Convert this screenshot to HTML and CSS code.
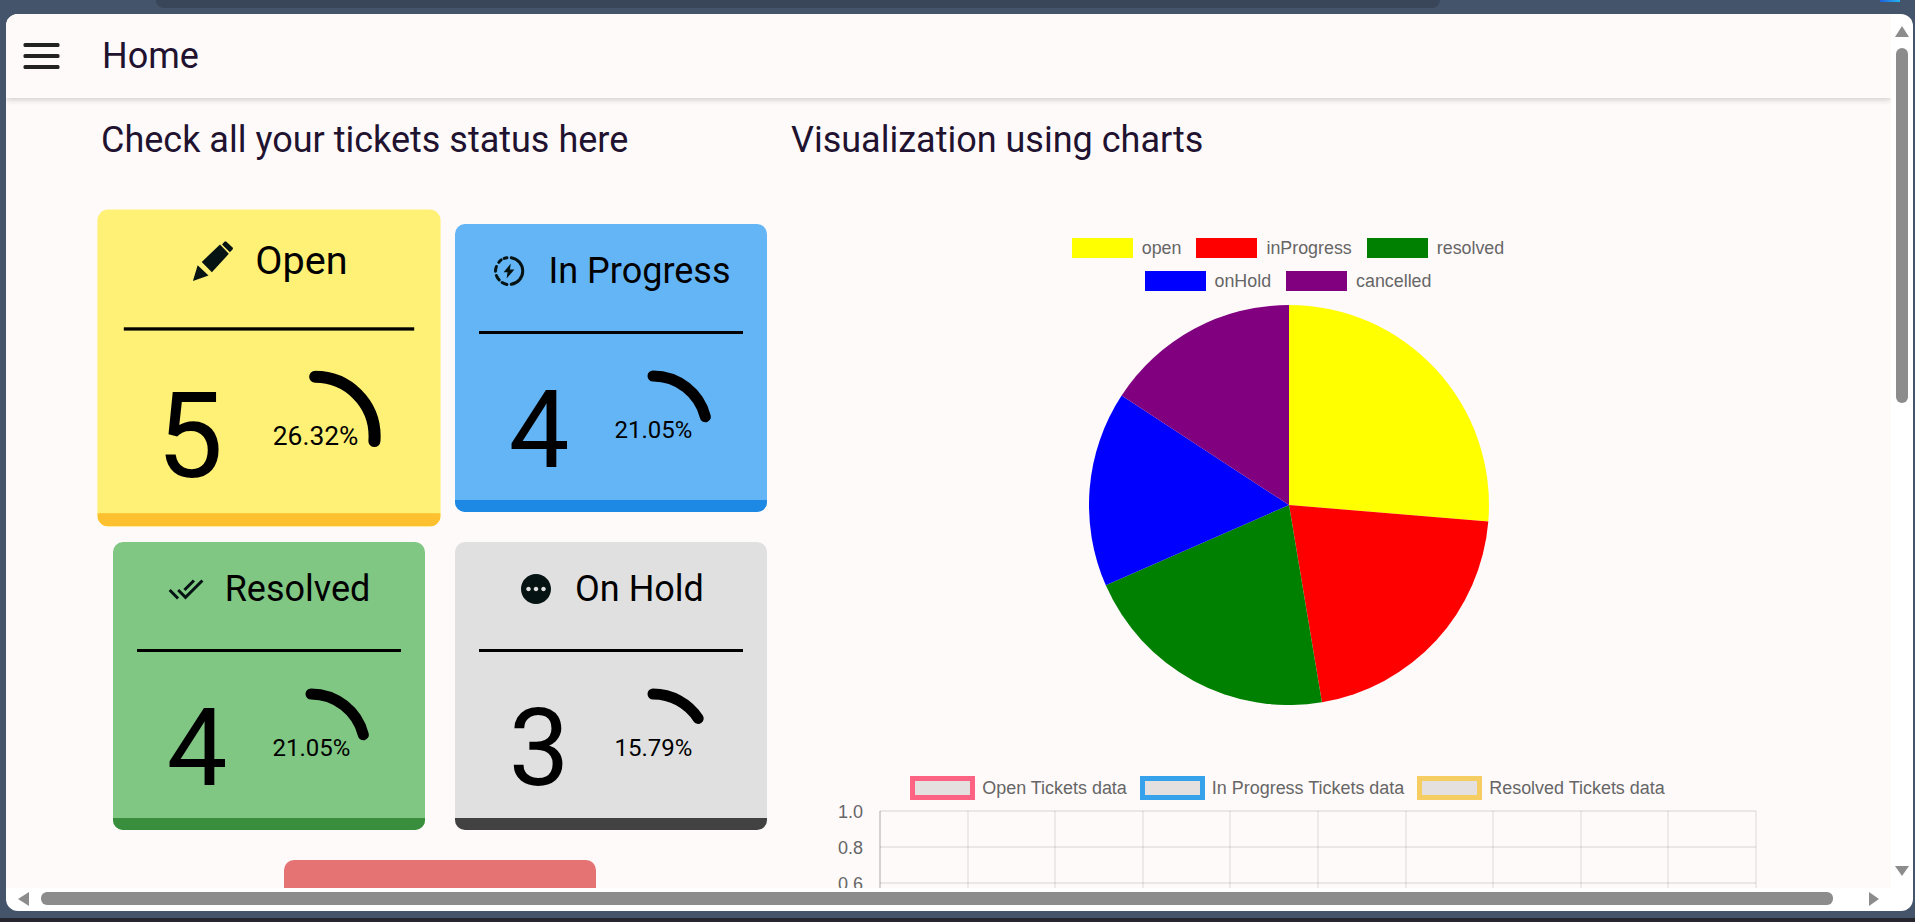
FILE: index.html
```html
<!DOCTYPE html>
<html>

	<head>
		<meta charset="UTF-8">
		<title>Home</title>
		<link rel="stylesheet" href="styles.css">
	</head>

	<body>
		<!--top of the browser behind the page-->
		<div class="topstrip">
			<div class="toptab"></div>
			<div class="topmark"></div>
		</div>

		<div class="window">
			<div class="pane">
				<header class="appbar">
					<svg class="menuicon" viewBox="0 0 36 26">
						<rect x="0" y="0" width="36" height="4" rx="1.5"></rect>
						<rect x="0" y="11" width="36" height="4" rx="1.5"></rect>
						<rect x="0" y="22" width="36" height="4" rx="1.5"></rect>
					</svg>
					<div class="apptitle">Home</div>
				</header>

				<div class="content">
					<!--ticket cards-->
					<section class="leftcol">
						<h2 class="heading">Check all your tickets status here</h2>
						<div class="cards">
							<div class="card card-open">
								<div class="cardtitle">
									<svg class="icon" viewBox="60 36 130 128">
										<polygon points="66,158 80,112 112,142"></polygon>
										<polygon points="92,102 146,50 172,78 122,132"></polygon>
										<path d="M152 50 l7-8 q3-2 6 0 l18 17 q3 3 0 6 l-8 8 z"></path>
									</svg>
									<span>Open</span>
								</div>
								<div class="divider"></div>
								<div class="cardbody">
									<div class="count">5</div>
									<div class="gauge">
										<svg viewBox="0 0 120 120">
											<circle cx="60" cy="60" r="54" pathLength="100" stroke-dasharray="26.32 200" transform="rotate(-90 60 60)"></circle>
										</svg>
										<span class="percent">26.32%</span>
									</div>
								</div>
								<div class="cardfoot"></div>
							</div>

							<div class="card card-progress">
								<div class="cardtitle">
									<svg class="icon" viewBox="0 0 24 24">
										<g class="dashring">
											<path d="M13.5 3.1A9 9 0 0 1 13.5 20.9"></path>
											<path d="M10.6 21A9 9 0 0 1 7.4 19.7"></path>
											<path d="M5.5 18A9 9 0 0 1 3.6 15"></path>
											<path d="M3 12.2A9 9 0 0 1 3.6 9"></path>
											<path d="M5.2 6.2A9 9 0 0 1 6.8 4.6"></path>
											<path d="M8.8 3.6A9 9 0 0 1 10.6 3.1"></path>
										</g>
										<polygon points="13.2,7 8.4,12.8 11,12.8 10.4,17 15.6,11 12.6,11"></polygon>
									</svg>
									<span>In Progress</span>
								</div>
								<div class="divider"></div>
								<div class="cardbody">
									<div class="count">4</div>
									<div class="gauge">
										<svg viewBox="0 0 120 120">
											<circle cx="60" cy="60" r="54" pathLength="100" stroke-dasharray="21.05 200" transform="rotate(-90 60 60)"></circle>
										</svg>
										<span class="percent">21.05%</span>
									</div>
								</div>
								<div class="cardfoot"></div>
							</div>

							<div class="card card-resolved">
								<div class="cardtitle">
									<svg class="icon" viewBox="0 0 24 24">
										<path d="M18 7l-1.41-1.41-6.34 6.34 1.41 1.41L18 7zm4.24-1.41L11.66 16.17 7.48 12l-1.41 1.41L11.66 19l12-12-1.42-1.41zM.41 13.41L6 19l1.41-1.41L1.83 12 .41 13.41z"></path>
									</svg>
									<span>Resolved</span>
								</div>
								<div class="divider"></div>
								<div class="cardbody">
									<div class="count">4</div>
									<div class="gauge">
										<svg viewBox="0 0 120 120">
											<circle cx="60" cy="60" r="54" pathLength="100" stroke-dasharray="21.05 200" transform="rotate(-90 60 60)"></circle>
										</svg>
										<span class="percent">21.05%</span>
									</div>
								</div>
								<div class="cardfoot"></div>
							</div>

							<div class="card card-hold">
								<div class="cardtitle">
									<svg class="icon" viewBox="0 0 24 24">
										<path d="M12 2C6.48 2 2 6.48 2 12s4.48 10 10 10 10-4.48 10-10S17.52 2 12 2zM7 13.5c-.83 0-1.5-.67-1.5-1.5s.67-1.5 1.5-1.5 1.5.67 1.5 1.5-.67 1.5-1.5 1.5zm5 0c-.83 0-1.5-.67-1.5-1.5s.67-1.5 1.5-1.5 1.5.67 1.5 1.5-.67 1.5-1.5 1.5zm5 0c-.83 0-1.5-.67-1.5-1.5s.67-1.5 1.5-1.5 1.5.67 1.5 1.5-.67 1.5-1.5 1.5z"></path>
									</svg>
									<span>On Hold</span>
								</div>
								<div class="divider"></div>
								<div class="cardbody">
									<div class="count">3</div>
									<div class="gauge">
										<svg viewBox="0 0 120 120">
											<circle cx="60" cy="60" r="54" pathLength="100" stroke-dasharray="15.79 200" transform="rotate(-90 60 60)"></circle>
										</svg>
										<span class="percent">15.79%</span>
									</div>
								</div>
								<div class="cardfoot"></div>
							</div>

							<div class="card card-cancelled"></div>
						</div>
					</section>

					<!--charts-->
					<section class="rightcol">
						<h2 class="heading">Visualization using charts</h2>
						<div class="charts">
							<div class="pielegend">
								<div class="legendrow">
									<span class="legenditem"><i class="swatch" style="background:#ffff00"></i>open</span>
									<span class="legenditem"><i class="swatch" style="background:#ff0000"></i>inProgress</span>
									<span class="legenditem"><i class="swatch" style="background:#008000"></i>resolved</span>
								</div>
								<div class="legendrow">
									<span class="legenditem"><i class="swatch" style="background:#0000ff"></i>onHold</span>
									<span class="legenditem"><i class="swatch" style="background:#800080"></i>cancelled</span>
								</div>
							</div>

							<svg class="pie" viewBox="-200 -200 400 400">
								<path fill="#ffff00" d="M0 0 L0 -200 A200 200 0 0 1 199.3 16.5 Z"></path>
								<path fill="#ff0000" d="M0 0 L199.3 16.5 A200 200 0 0 1 32.9 197.3 Z"></path>
								<path fill="#008000" d="M0 0 L32.9 197.3 A200 200 0 0 1 -183.2 80.3 Z"></path>
								<path fill="#0000ff" d="M0 0 L-183.2 80.3 A200 200 0 0 1 -167.4 -109.4 Z"></path>
								<path fill="#800080" d="M0 0 L-167.4 -109.4 A200 200 0 0 1 0 -200 Z"></path>
							</svg>

							<div class="linelegend">
								<span class="lineitem"><i class="linebox box-open"></i>Open Tickets data</span>
								<span class="lineitem"><i class="linebox box-progress"></i>In Progress Tickets data</span>
								<span class="lineitem"><i class="linebox box-resolved"></i>Resolved Tickets data</span>
							</div>

							<svg class="linechart" width="940" height="110" viewBox="0 0 940 110">
								<g class="grid">
									<path d="M62 11H938M62 47H938M62 83H938"></path>
									<path d="M150 11V110M237 11V110M325 11V110M412 11V110M500 11V110M588 11V110M675 11V110M763 11V110M850 11V110M938 11V110"></path>
									<path class="axis" d="M62 11V110"></path>
								</g>
								<text x="45" y="18">1.0</text>
								<text x="45" y="54">0.8</text>
								<text x="45" y="90">0.6</text>
							</svg>
						</div>
					</section>
				</div>
			</div>

			<!--scrollbars-->
			<div class="vscroll">
				<div class="arrow-up"></div>
				<div class="vthumb"></div>
				<div class="arrow-down"></div>
			</div>
			<div class="hscroll">
				<div class="arrow-left"></div>
				<div class="hthumb"></div>
				<div class="arrow-right"></div>
			</div>
			<div class="corner"></div>
		</div>

		<div class="bottomstrip"></div>
	</body>

</html>
```

FILE: styles.css
```css
* {
	margin: 0;
	padding: 0;
	box-sizing: border-box;
}

body {
	width: 1915px;
	height: 922px;
	overflow: hidden;
	display: flex;
	flex-direction: column;
	background-color: #44546a;
	font-family: Roboto, "Liberation Sans", sans-serif;
}

.topstrip {
	height: 14px;
	display: flex;
	align-items: flex-start;
}

.toptab {
	width: 1284px;
	height: 8px;
	margin-left: 156px;
	background-color: #394558;
	border-radius: 0 0 10px 10px;
}

.topmark {
	width: 20px;
	height: 2px;
	margin-left: 440px;
	background: linear-gradient(90deg, #1f5fe0, #22b5f0);
}

.bottomstrip {
	height: 4px;
	margin-top: 7px;
	background-color: #26262f;
}

.window {
	height: 897px;
	margin: 0 2px 0 6px;
	display: grid;
	grid-template-columns: 1885px 22px;
	grid-template-rows: 874px 23px;
	background-color: #fff;
	border-radius: 12px;
	overflow: hidden;
}

.pane {
	overflow: hidden;
	background-color: #fffafa;
}

/* app bar */
.appbar {
	height: 84px;
	display: flex;
	align-items: center;
	padding-left: 17px;
	position: relative;
	background-color: #fffafa;
	box-shadow: 0 2px 6px rgba(0, 0, 0, 0.18);
}

.menuicon {
	width: 37px;
	height: 26px;
	fill: #222;
}

.apptitle {
	margin-left: 42px;
	font-size: 36px;
	line-height: 40px;
	color: #21122f;
}

.content {
	display: flex;
}

.heading {
	height: 40px;
	font-size: 36px;
	line-height: 40px;
	font-weight: 400;
	white-space: nowrap;
	color: #21122f;
}

.leftcol {
	width: 761px;
	flex: none;
	padding: 22px 0 0 95px;
}

.leftcol .heading {
	margin-bottom: 64px;
}

.rightcol {
	width: 996px;
	flex: none;
	margin-left: 24px;
	padding-top: 22px;
}

.rightcol .heading {
	margin-bottom: 78px;
}

/* cards */
.cards {
	width: 654px;
	margin-left: 12px;
	display: flex;
	flex-wrap: wrap;
	justify-content: center;
	gap: 30px;
}

.card {
	width: 312px;
	height: 288px;
	display: flex;
	flex-direction: column;
	border-radius: 10px;
	overflow: hidden;
	color: #000;
}

.card-open {
	background-color: #fff176;
	transform: scale(1.1);
}

.card-progress {
	background-color: #64b5f6;
}

.card-resolved {
	background-color: #81c784;
}

.card-hold {
	background-color: #e0e0e0;
}

.card-cancelled {
	background-color: #e57373;
}

.card-open .cardfoot {
	background-color: #fdc02f;
}

.card-progress .cardfoot {
	background-color: #1e88e5;
}

.card-resolved .cardfoot {
	background-color: #388e3c;
}

.card-hold .cardfoot {
	background-color: #424242;
}

.cardtitle {
	height: 94px;
	display: flex;
	align-items: center;
	justify-content: center;
	gap: 21px;
	font-size: 36px;
}

.icon {
	width: 36px;
	height: 36px;
	flex: none;
	fill: #051313;
}

.card-open .cardtitle {
	gap: 19px;
}

.card-open .icon {
	width: 40px;
	height: 40px;
}

.dashring path {
	fill: none;
	stroke: #051313;
	stroke-width: 2;
	stroke-linecap: round;
}

.divider {
	height: 3px;
	margin: 13px 24px 0;
	background-color: #000;
}

.cardbody {
	height: 166px;
	padding-top: 26px;
	display: flex;
	align-items: center;
	justify-content: center;
	gap: 24px;
}

.count {
	font-size: 108px;
	line-height: 120px;
}

.gauge {
	width: 120px;
	height: 120px;
	display: grid;
	place-items: center;
}

.gauge svg,
.gauge .percent {
	grid-area: 1 / 1;
}

.gauge svg {
	width: 120px;
	height: 120px;
}

.gauge circle {
	fill: none;
	stroke: #000;
	stroke-width: 11;
	stroke-linecap: round;
}

.percent {
	font-size: 24px;
}

.cardfoot {
	height: 12px;
}

/* charts */
.charts {
	display: flex;
	flex-direction: column;
	align-items: center;
	font-family: "Liberation Sans", Arial, sans-serif;
	color: #666;
}

.pielegend {
	margin-right: 2px;
	display: flex;
	flex-direction: column;
	gap: 13px;
}

.legendrow {
	display: flex;
	justify-content: center;
	gap: 15px;
}

.legenditem {
	display: flex;
	align-items: center;
	height: 20px;
	gap: 9px;
	font-size: 17.85px;
}

.swatch {
	width: 61px;
	height: 20px;
	display: block;
}

.pie {
	width: 400px;
	height: 400px;
	margin-top: 14px;
	display: block;
}

.linelegend {
	margin: 71px 3px 0 0;
	display: flex;
	justify-content: center;
	gap: 13px;
}

.lineitem {
	display: flex;
	align-items: center;
	height: 24px;
	gap: 7px;
	font-size: 17.95px;
}

.linebox {
	width: 65px;
	height: 24px;
	display: block;
	border: 5px solid;
	background-color: #e3e0df;
}

.box-open {
	border-color: #ff6384;
}

.box-progress {
	border-color: #36a2eb;
}

.box-resolved {
	border-color: #f5cd62;
}

.linechart {
	margin-right: 2px;
	display: block;
	flex: none;
}

.linechart text {
	font-size: 18px;
	fill: #666;
	text-anchor: end;
}

.grid path {
	fill: none;
	stroke: rgba(0, 0, 0, 0.1);
	stroke-width: 1.3;
}

.grid .axis {
	stroke: rgba(0, 0, 0, 0.25);
}

/* scrollbars */
.vscroll {
	display: flex;
	flex-direction: column;
	align-items: center;
	padding: 12px 0;
}

.vthumb {
	width: 12px;
	height: 355px;
	margin-top: 11px;
	border-radius: 6px;
	background-color: #8c8c8c;
}

.arrow-up,
.arrow-down {
	width: 0;
	height: 0;
	border-left: 7px solid transparent;
	border-right: 7px solid transparent;
}

.arrow-up {
	border-bottom: 11px solid #8c8c8c;
}

.arrow-down {
	margin-top: auto;
	border-top: 10px solid #8c8c8c;
}

.hscroll {
	display: flex;
	align-items: center;
	padding: 0 0 2px 12px;
}

.hthumb {
	width: 1792px;
	height: 13px;
	margin-left: 12px;
	border-radius: 6px;
	background-color: #8c8c8c;
}

.arrow-left,
.arrow-right {
	width: 0;
	height: 0;
	border-top: 7px solid transparent;
	border-bottom: 7px solid transparent;
}

.arrow-left {
	border-right: 11px solid #8c8c8c;
}

.arrow-right {
	margin-left: 36px;
	border-left: 10px solid #8c8c8c;
}
```
